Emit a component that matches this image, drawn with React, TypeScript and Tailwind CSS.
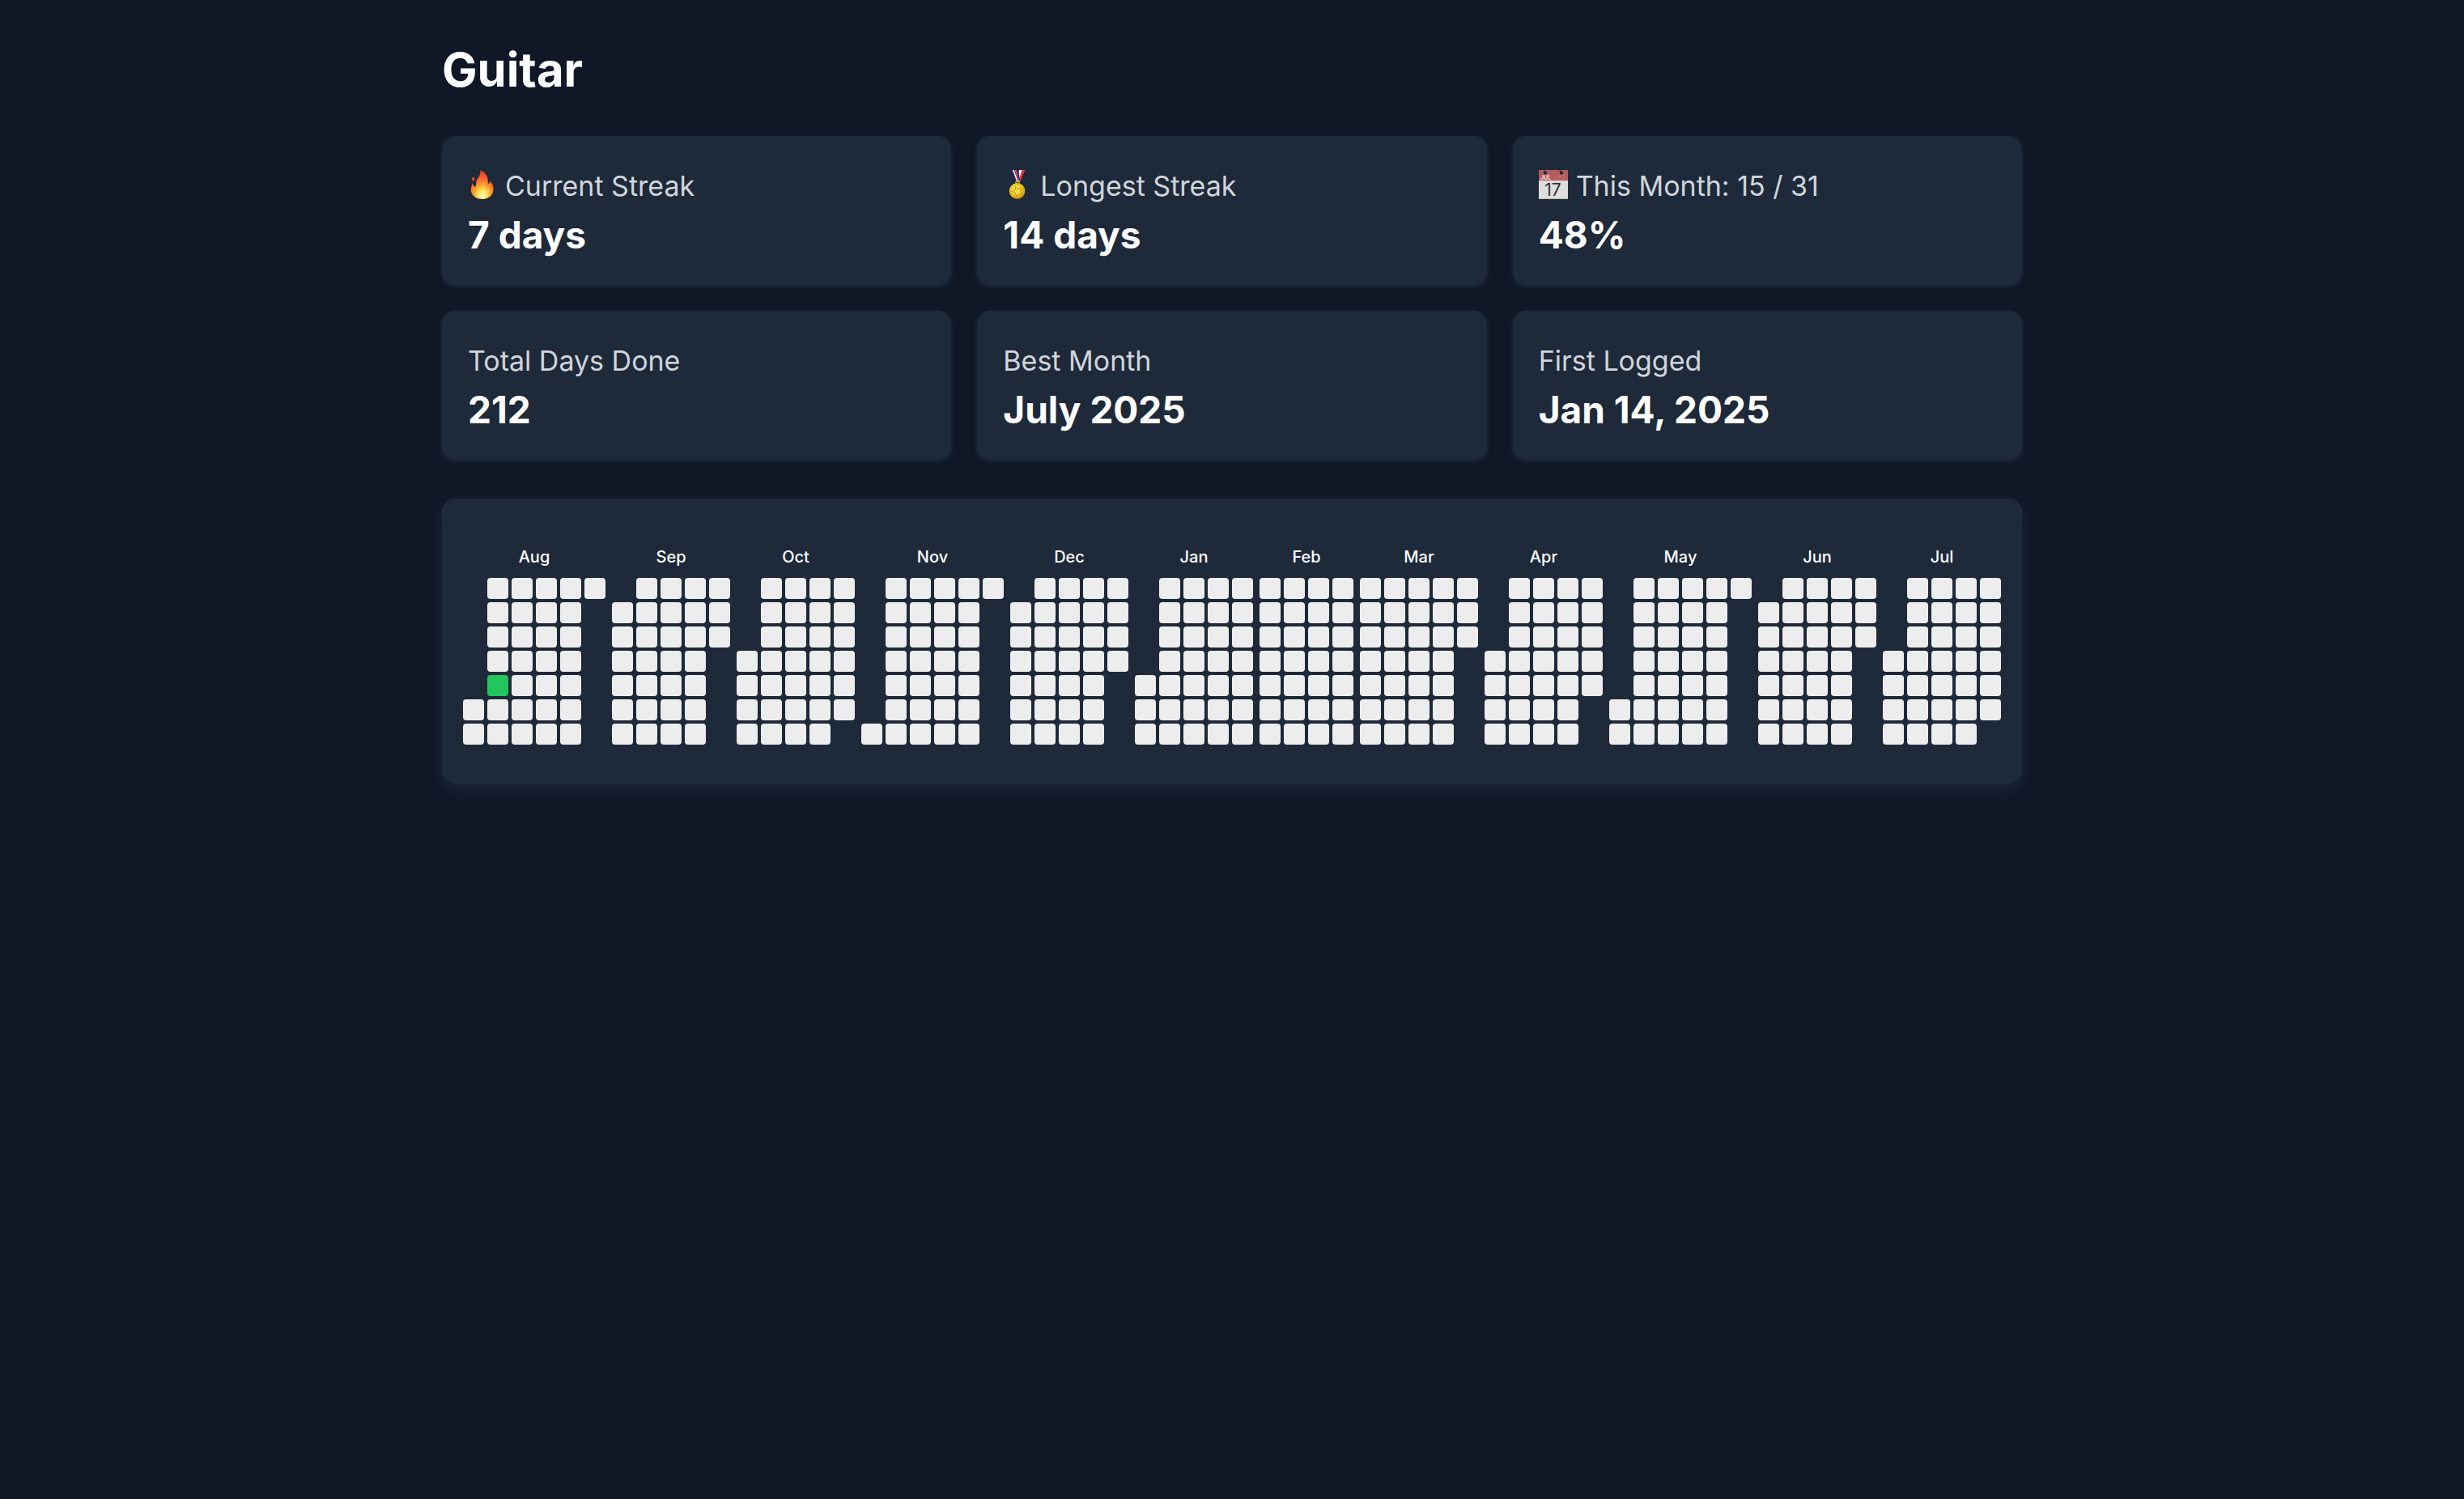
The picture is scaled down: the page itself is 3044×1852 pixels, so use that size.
import React from "react";

type Month = { name: string; start: number; days: number };

const months: Month[] = [
  { name: "Aug", start: 5, days: 31 },
  { name: "Sep", start: 1, days: 30 },
  { name: "Oct", start: 3, days: 31 },
  { name: "Nov", start: 6, days: 30 },
  { name: "Dec", start: 1, days: 31 },
  { name: "Jan", start: 4, days: 31 },
  { name: "Feb", start: 0, days: 28 },
  { name: "Mar", start: 0, days: 31 },
  { name: "Apr", start: 3, days: 30 },
  { name: "May", start: 5, days: 31 },
  { name: "Jun", start: 1, days: 30 },
  { name: "Jul", start: 3, days: 31 },
];

const done = new Set(["Aug-7"]);

function Flame() {
  return (
    <svg viewBox="0 0 36 36" className="mt-2.5 size-9 shrink-0" aria-hidden="true">
      <defs>
        <radialGradient id="flame" cx="0.5" cy="0.88" r="0.85">
          <stop offset="0" stopColor="#fff9a0" />
          <stop offset="0.2" stopColor="#ffe04a" />
          <stop offset="0.45" stopColor="#ff9c2e" />
          <stop offset="0.75" stopColor="#fb5a2a" />
          <stop offset="1" stopColor="#e8402a" />
        </radialGradient>
        <radialGradient id="flameCore" cx="0.5" cy="0.85" r="0.7">
          <stop offset="0" stopColor="#fffbc4" />
          <stop offset="0.5" stopColor="#ffe259" />
          <stop offset="1" stopColor="#ffb03a" stopOpacity="0.4" />
        </radialGradient>
      </defs>
      <path
        d="M15.500 0c3.800 2 8.600 6 9.200 11.400.2 2.200-.2 4.300.5 5 .8.800 1.900-.2 1.800-2.700 3 2.600 5 6.700 4.500 11C30.900 31.600 25.500 36 18 36 9.800 36 4 31.300 3.800 25c0-3.300 1-6.200 2.100-8.700.6 2 1.100 3.700 2.400 4.200 1.800.5 2-2.300 1.900-4.600C10 10.600 16.600 8 15.500 0Z"
        fill="url(#flame)"
      />
      <path d="M7.400 8.200c1.200 2 .9 4.300-.6 5.700-1.300-.6-1.900-1.700-1.600-3.100.3-1.200 1.300-1.700 2.200-2.600Z" fill="#f2502b" />
      <path
        d="M18.600 15c3.200 3.200 4 6.700 5.600 7.300.9.300 1.700-.4 2.200-1.500 1.600 7.500-1.300 14-8.400 14-6.900 0-10-5.200-8.200-11 .6 1.500 1.700 2.400 3 1.500 2.700-1.800 4.500-6 5.800-10.300Z"
        fill="url(#flameCore)"
      />
    </svg>
  );
}

function Medal() {
  return (
    <svg viewBox="0 0 36 36" className="mt-2.5 size-9 shrink-0" aria-hidden="true">
      <defs>
        <radialGradient id="gold" cx="0.42" cy="0.35" r="0.65">
          <stop offset="0" stopColor="#fff06a" />
          <stop offset="0.6" stopColor="#f5cd20" />
          <stop offset="1" stopColor="#c8920a" />
        </radialGradient>
      </defs>
      <path d="M17.500 0h3L17.500 9Z" fill="#27337f" />
      <path d="M20 0h6.800L20.500 15h-3Z" fill="#f4f6fb" />
      <path d="M23.500 0h3.900L21 14.500h-2Z" fill="#e5323a" />
      <path d="M9.500 0H13l5.200 14.500h-3Z" fill="#25317c" />
      <path d="M12 0h4l4.500 13.500-3 1.500Z" fill="#f4f6fb" />
      <path d="M13.500 0h2.300l3.900 12-1.200 1.500Z" fill="#e5323a" />
      <path d="M16.500 0h2.500l2 12-1.500 1.500Z" fill="#25317c" />
      <circle cx="18" cy="15.800" r="2" fill="none" stroke="#d9a514" strokeWidth="1.400" />
      <circle cx="17.600" cy="26" r="9.800" fill="url(#gold)" />
      <circle cx="17.600" cy="26" r="7.900" fill="none" stroke="#d5a414" strokeWidth="0.800" />
      <path
        d="m15.600 20.500 3.300 3 4.200-1.300-1.600 4 2.500 3.500-4.400-.2-2.900 3.200-1.200-4.300-4-1.800 3.800-2.200Z"
        fill="#f9dd45"
        stroke="#b98a0c"
        strokeWidth="0.900"
        strokeLinejoin="round"
      />
    </svg>
  );
}

function CalendarPage() {
  return (
    <svg viewBox="0 0 36 36" className="mt-2.5 size-9 shrink-0" aria-hidden="true">
      <path d="M0 0h36v36H0Z" fill="#dedede" />
      <path d="M0 0h36v13.500H0Z" fill="#b35c5f" />
      <path d="M0 13.500h36v.8H0Z" fill="#f0e8e8" />
      <path d="M0 34.800h36V36H0Z" fill="#c4c4c4" />
      <circle cx="8" cy="3.400" r="2.200" fill="#1e2939" />
      <circle cx="28" cy="3.400" r="2.200" fill="#1e2939" />
      <path d="M7.500 3 6.500 0M27.500 3 25.500 0" stroke="#1e2939" strokeWidth="1" />
      <path d="M20 9h14M20 11.500h13M24 6.800h10" stroke="#c27679" strokeWidth="1.200" strokeDasharray="1.500 1" />
      <text x="2" y="12" fontSize="7" fontWeight="700" fill="#f3dddd" fontFamily="Inter, sans-serif">
        JUL
      </text>
      <text x="17.500" y="32" fontSize="21" textAnchor="middle" fill="#333" fontFamily="Inter, sans-serif">
        17
      </text>
    </svg>
  );
}

function StatCard({ icon, label, value }: { icon?: React.ReactNode; label: string; value: string }) {
  return (
    <div className="rounded-2xl bg-gray-800 p-8 shadow-[0_2px_6px_#1e2939]">
      <dt className="flex items-start gap-2.5 text-[34px] leading-15 text-gray-300">
        {icon}
        {label}
      </dt>
      <dd className="text-[46px] leading-15 font-bold text-white">{value}</dd>
    </div>
  );
}

function MonthBlock({ name, start, days }: Month) {
  return (
    <section className="flex flex-col gap-2">
      <h2 className="text-center text-xl leading-9 font-medium text-white">{name}</h2>
      <div className="grid grid-flow-col grid-rows-7 gap-1">
        {Array.from({ length: start }, (_, i) => (
          <span key={`blank-${i}`} className="size-6.5" />
        ))}
        {Array.from({ length: days }, (_, i) => (
          <span
            key={i}
            className={
              done.has(`${name}-${i + 1}`)
                ? "size-6.5 rounded-sm bg-[#22c55e]"
                : "size-6.5 rounded-sm bg-[#ededed]"
            }
          />
        ))}
      </div>
    </section>
  );
}

export default function App() {
  return (
    <div className="min-h-screen bg-gray-900 font-[Inter,sans-serif]">
      <main className="mx-auto max-w-[2048px] p-12">
        <h1 className="mb-11 text-[58px] leading-19 font-bold text-white">Guitar</h1>
        <dl className="mb-12 grid grid-cols-3 gap-8">
          <StatCard icon={<Flame />} label="Current Streak" value="7 days" />
          <StatCard icon={<Medal />} label="Longest Streak" value="14 days" />
          <StatCard icon={<CalendarPage />} label="This Month: 15 / 31" value="48%" />
          <StatCard label="Total Days Done" value="212" />
          <StatCard label="Best Month" value="July 2025" />
          <StatCard label="First Logged" value="Jan 14, 2025" />
        </dl>
        <div className="flex justify-center gap-2 rounded-2xl bg-gray-800 px-6 pt-[54px] pb-12 shadow-[0_8px_20px_-2px_#1e2939]">
          {months.map((month) => (
            <MonthBlock key={month.name} {...month} />
          ))}
        </div>
      </main>
    </div>
  );
}
